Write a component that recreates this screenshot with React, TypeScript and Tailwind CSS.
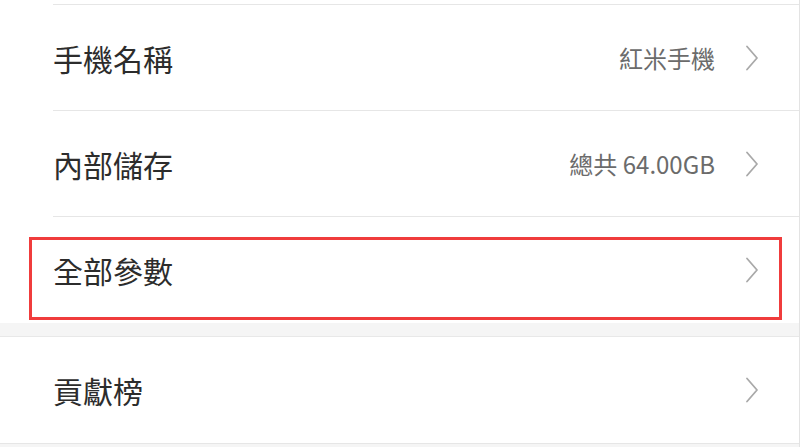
const Chevron = () => (
  <svg width="14" height="26" viewBox="0 0 14 26" fill="none" className="shrink-0">
    <path d="M2 1.5 L12 13 L2 24.5" stroke="#a9a9a9" strokeWidth="1.8" strokeLinecap="round" strokeLinejoin="round" />
  </svg>
);

type RowProps = { label: string; value?: string; divider?: boolean };

const Row = ({ label, value, divider = true }: RowProps) => (
  <div className="bg-white pl-[53px]">
    <div
      className={`flex items-center h-[106px] pr-[40px] ${divider ? "border-b border-[#e6e6e6]" : ""}`}
    >
      <span className="flex-1 text-[30px] leading-none text-[#2c2c2c]">{label}</span>
      {value && <span className="text-[24px] leading-none text-[#6b6b6b] mr-[30px]">{value}</span>}
      {!value && <span className="mr-[30px]" />}
      <Chevron />
    </div>
  </div>
);

export default function App() {
  return (
    <div
      className="w-[800px] h-[447px] overflow-hidden bg-[#f5f5f5] border-r border-[#e3e3e3]"
      style={{ fontFamily: '"Noto Sans CJK TC", "Noto Sans", sans-serif' }}
    >
      <div className="relative">
        <div className="bg-white pl-[53px]">
          <div className="h-[5px] border-b border-[#e6e6e6]" />
        </div>
        <Row label="手機名稱" value="紅米手機" />
        <Row label="內部儲存" value="總共 64.00GB" />
        <Row label="全部參數" divider={false} />
        {/* highlight annotation */}
        <div className="absolute left-[29px] top-[237px] w-[753px] h-[83px] border-[3px] border-[#f03c3c] pointer-events-none" />
      </div>
      <div className="h-[14px] border-b border-[#e8e8e8]" />
      <div className="border-b border-[#e6e6e6]">
        <Row label="貢獻榜" divider={false} />
      </div>
    </div>
  );
}
